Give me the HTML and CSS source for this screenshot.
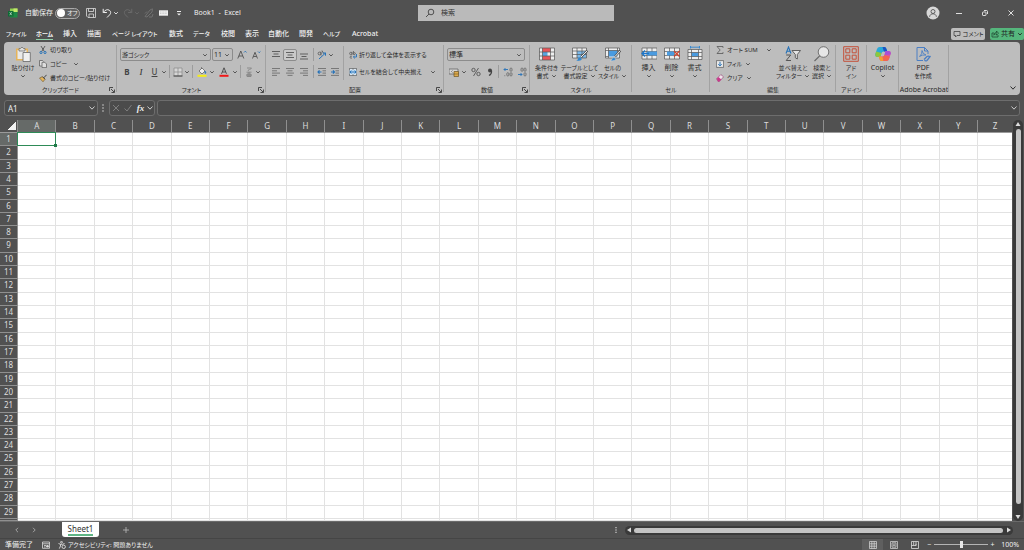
FILE: index.html
```html
<!DOCTYPE html>
<html lang="ja">
<head>
<meta charset="utf-8">
<title>Book1 - Excel</title>
<link rel="stylesheet" href="styles.css">
</head>
<body>
<svg class="sprite" aria-hidden="true">
  <symbol id="caret" viewBox="0 0 6 6"><path d="M1.200 2.200L3 4l1.800-1.800" fill="none" stroke="currentColor" stroke-width=".9"/></symbol>
  <symbol id="chev" viewBox="0 0 8 8"><path d="M1.500 2.500L4 5.200l2.500-2.700" fill="none" stroke="currentColor" stroke-width="1"/></symbol>
  <symbol id="launch" viewBox="0 0 6 6"><path d="M.5 4V.5H4M2 2l3 3M5.500 2.500v3h-3" fill="none" stroke="currentColor" stroke-width=".8"/></symbol>
</svg>
<div class="app">
  <header class="titlebar">
    <div class="quick">
      <svg class="logo" viewBox="0 0 10 10"><path d="M2 .5h7.500v3.500H2z" fill="#8fd14f"/><path d="M2 4h7.500v5.500H2z" fill="#1e8a45"/><path d="M5.500.5h4V4h-4z" fill="#c4e86b"/><rect y="3" width="5.500" height="5.500" rx=".6" fill="#0f6b35"/><path d="M1.700 4.200l2 3M3.700 4.200l-2 3" stroke="#cfe8d6" stroke-width=".7"/></svg>
      <label class="autosave"><span>自動保存</span><input type="checkbox" class="switch-input"><span class="switch"><i></i>オフ</span></label>
      <button class="qb qb-save" aria-label="保存"><svg viewBox="0 0 10 10"><path d="M.5.500h9v9h-7.500L.5 8zM2.500.5v3h5v-3M3 9.500V6h4.500v3.500" fill="none" stroke="#ddd" stroke-width=".8"/></svg></button>
      <button class="qb qb-undo" aria-label="元に戻す"><svg viewBox="0 0 10 10"><path d="M1.200.8v3.700h3.700M1.300 4.300C3 2 5.500 1 7.300 2.200s1.700 3.300.3 4.700L5 9.500" fill="none" stroke="#eee" stroke-width="1"/></svg></button>
      <svg class="c6 light"><use href="#caret"/></svg>
      <button class="qb qb-redo" aria-label="やり直し" disabled><svg viewBox="0 0 10 10"><path d="M8.800.8v3.700H5.100M8.700 4.300C7 2 4.500 1 2.700 2.200S1 5.500 2.400 6.900L5 9.500" fill="none" stroke="#6a6a6a" stroke-width="1"/></svg></button>
      <svg class="c6 dim"><use href="#caret"/></svg>
      <button class="qb qb-pen" aria-label="書式" disabled><svg viewBox="0 0 10 10"><path d="M1 8.500L6 2l2.500-1.200L8 4 3 9zM1 5.500l2-2M5 9h3l1-3" fill="none" stroke="#707070" stroke-width="1"/></svg></button>
      <button class="qb qb-key" aria-label="フォーム"><svg viewBox="0 0 10 10"><rect y="2.300" width="9" height="5.400" fill="#eee"/><path d="M1 4h7M1 5.500h7" stroke="#aaa" stroke-width=".5" stroke-dasharray="1 .6"/></svg></button>
      <button class="qb qb-more" aria-label="カスタマイズ"><svg viewBox="0 0 10 10"><path d="M3 3.500h4" stroke="#eee"/><path d="M3 5.500h4L5 7.500z" fill="#eee"/></svg></button>
      <span class="doc">Book1&nbsp; -&nbsp; Excel</span>
    </div>
    <label class="search"><svg viewBox="0 0 10 10"><circle cx="6" cy="4" r="2.800" fill="none" stroke="#444" stroke-width=".9"/><path d="M4 6L1 9" stroke="#444" stroke-width=".9"/></svg><input type="text" placeholder="検索" aria-label="検索"></label>
    <div class="window">
      <button class="avatar" aria-label="アカウント"><svg viewBox="0 0 14 14"><circle cx="7" cy="7" r="6.500" fill="#d8d8d8"/><circle cx="7" cy="5.500" r="2" fill="none" stroke="#555" stroke-width=".9"/><path d="M3.600 10.800c.3-4 6.500-4 6.800 0" fill="none" stroke="#555" stroke-width=".9"/></svg></button>
      <button aria-label="最小化"><svg viewBox="0 0 8 8"><path d="M1 4.500h6" stroke="#eee" stroke-width=".9"/></svg></button>
      <button aria-label="元のサイズ"><svg viewBox="0 0 8 8"><rect x="1.500" y="3" width="3.500" height="3.500" rx=".6" fill="none" stroke="#eee" stroke-width=".9"/><path d="M3 1.500h2.500q1 0 1 1V5" fill="none" stroke="#eee" stroke-width=".9"/></svg></button>
      <button aria-label="閉じる"><svg viewBox="0 0 8 8"><path d="M1.500 1.500l5 5M6.500 1.500l-5 5" stroke="#eee" stroke-width=".9"/></svg></button>
    </div>
  </header>

  <div class="tabrow">
    <nav class="tabs">
      <a href="#" class="kana">ファイル</a><a href="#" class="kana on">ホーム</a><a href="#">挿入</a><a href="#">描画</a><a href="#" class="kana">ページ レイアウト</a><a href="#">数式</a><a href="#" class="kana">データ</a><a href="#">校閲</a><a href="#">表示</a><a href="#">自動化</a><a href="#">開発</a><a href="#" class="kana">ヘルプ</a><a href="#">Acrobat</a>
    </nav>
    <button class="comment"><svg viewBox="0 0 8 8"><path d="M1 1.500h6v4H4L2.500 7V5.500H1z" fill="none" stroke="#444" stroke-width=".8"/></svg>コメント</button>
    <button class="share"><svg viewBox="0 0 8 8"><path d="M3 3H1v4h6V5M2.800 5.200C3 3 4.300 2.500 5.500 2.500V1l2 2.200-2 2V3.800C4.300 3.800 3.500 4 2.800 5.200z" fill="none" stroke="#204a32" stroke-width=".8"/></svg>共有<svg class="c6"><use href="#caret"/></svg></button>
  </div>

  <section class="ribbon">
    <div class="group g-clip">
      <div class="body">
        <button class="big w28"><svg viewBox="0 0 16 16"><path d="M1 2.500h12v12H1z" fill="#e6b45a"/><path d="M2.500 4h9v9h-9z" fill="#e9e9e9"/><path d="M4 2.500h1.500q1.500-3 3 0H10V5H4z" fill="#ddd" stroke="#666" stroke-width=".7"/><path d="M8 6.500h7.300v9H8z" fill="#f0f0f0" stroke="#666" stroke-width=".8"/></svg><span>貼り付け</span><svg class="c6"><use href="#caret"/></svg></button>
        <div class="stack">
          <button class="small"><svg viewBox="0 0 8 8"><path d="M2 0l3.300 5.500M6 0L2.700 5.500" stroke="#444" stroke-width=".8"/><g fill="none" stroke="#2672b8" stroke-width="1"><circle cx="2" cy="6.500" r="1.100"/><circle cx="6" cy="6.500" r="1.100"/></g></svg>切り取り</button>
          <button class="small"><svg viewBox="0 0 8 8"><path d="M2.500 6H.5V.5h3L4.500 1.500M3 2.300h2.800L7.500 4v3.600H3z" fill="#ddd" stroke="#555" stroke-width=".7"/></svg><span class="w20">コピー</span><svg class="c6"><use href="#caret"/></svg></button>
          <button class="small"><svg viewBox="0 0 8 8"><path d="M.5 4l3-1.300L6 5.200 4 7.800z" fill="#e6b45a" stroke="#6b5526" stroke-width=".6"/><path d="M3.500 2.700L6 5.200M4.800 3.800L7.600.8" stroke="#444" stroke-width="1"/></svg>書式のコピー/貼り付け</button>
        </div>
      </div>
      <div class="foot">クリップボード<button aria-label="クリップボード詳細"><svg><use href="#launch"/></svg></button></div>
    </div>

    <div class="group g-font">
      <div class="rows">
        <div class="row">
          <span class="combo w91"><select class="kana" aria-label="フォント"><option>游ゴシック</option></select><svg class="c6"><use href="#caret"/></svg></span>
          <span class="combo w21"><select aria-label="サイズ"><option>11</option></select><svg class="c6"><use href="#caret"/></svg></span>
          <button class="t w15" aria-label="拡大"><svg viewBox="0 0 10 10"><path d="M.8 8.500L3.800 1l3 7.500M2 6h3.600" fill="none" stroke="#444" stroke-width=".8"/><path d="M7 2.500l1.300-1.300 1.300 1.300" fill="none" stroke="#2672b8" stroke-width=".9"/></svg></button>
          <button class="t w14" aria-label="縮小"><svg viewBox="0 0 10 10"><path d="M1.500 8.500L4 2.300l2.500 6.200M2.500 6.500h3" fill="none" stroke="#444" stroke-width=".8"/><path d="M7 1.500l1.200 1.200 1.200-1.200" fill="none" stroke="#2672b8" stroke-width=".9"/></svg></button>
        </div>
        <div class="row">
          <button class="t w14"><b>B</b></button><button class="t w14"><i class="ital">I</i></button><button class="t w13"><u>U</u></button><svg class="c6"><use href="#caret"/></svg><i class="bar"></i>
          <button class="t w12" aria-label="罫線"><svg viewBox="0 0 10 10"><path d="M1 1h8v8H1zM5 1v8M1 5h8" fill="#d6d6d6" stroke="#888" stroke-width=".7"/><path d="M.5 9h9" stroke="#444"/></svg></button><svg class="c6"><use href="#caret"/></svg><i class="bar"></i>
          <button class="t w14" aria-label="塗りつぶし"><svg viewBox="0 0 10 10"><path d="M2 4L5 1l3 3-3 3zM4.500 1.500V.2" fill="#eee" stroke="#555" stroke-width=".7"/><path d="M8 4q1.500 2 .5 2.500T8 4" fill="#2672b8" stroke="#2672b8" stroke-width=".6"/><path d="M.5 7.800h9v2h-9z" fill="#f7ee14"/></svg></button><svg class="c6"><use href="#caret"/></svg>
          <button class="t w17" aria-label="文字の色"><svg viewBox="0 0 10 10"><path d="M2.500 6.800L5 .8l2.500 6M3.300 5h3.400" fill="none" stroke="#444" stroke-width=".9"/><path d="M.5 7.800h9v2h-9z" fill="#f01818"/></svg></button><svg class="c6"><use href="#caret"/></svg><i class="bar"></i>
          <button class="t w12" aria-label="ふりがな"><svg viewBox="0 0 10 10"><path d="M3 1h4.500L5.500 3M5 2.300L4 4M2.500 5.200h5M3 7h4v2.500H3zM2.500 8.200h5M5 5v4.500" fill="none" stroke="#777" stroke-width=".7"/></svg></button><svg class="c6"><use href="#caret"/></svg>
        </div>
      </div>
      <div class="foot">フォント<button aria-label="フォント詳細"><svg><use href="#launch"/></svg></button></div>
    </div>

    <div class="group g-align">
      <div class="body">
        <div class="rows flush">
          <div class="row">
            <button class="t w14" aria-label="上揃え"><svg viewBox="0 0 10 10"><path d="M1 1.500h8M2.500 4h5M1 6.500h8" stroke="#555" stroke-width=".9"/></svg></button>
            <button class="t w14 boxed" aria-label="上下中央揃え"><svg viewBox="0 0 10 10"><path d="M1 2.500h8M2.500 5h5M1 7.500h8" stroke="#555" stroke-width=".9"/></svg></button>
            <button class="t w14" aria-label="下揃え"><svg viewBox="0 0 10 10"><path d="M1 4h8M2.500 6.500h5M1 9h8" stroke="#555" stroke-width=".9"/></svg></button><i class="bar"></i>
            <button class="t w12" aria-label="方向"><svg viewBox="0 0 10 10"><g fill="none" stroke="#555" stroke-width=".8"><circle cx="2.500" cy="3.500" r="1.400"/><path d="M4 1.500v4M5 .5l1.500 3"/></g><path d="M2 9l6.500-6M5.800 3h2.700v2.700" fill="none" stroke="#2672b8" stroke-width="1"/></svg></button><svg class="c6"><use href="#caret"/></svg>
          </div>
          <div class="row">
            <button class="t w14" aria-label="左揃え"><svg viewBox="0 0 10 10"><path d="M1 1.500h8M1 3.800h5M1 6.100h8M1 8.400h5" stroke="#666" stroke-width=".8"/></svg></button>
            <button class="t w14" aria-label="中央揃え"><svg viewBox="0 0 10 10"><path d="M1 1.500h8M2.500 3.800h5M1 6.100h8M2.500 8.400h5" stroke="#666" stroke-width=".8"/></svg></button>
            <button class="t w14" aria-label="右揃え"><svg viewBox="0 0 10 10"><path d="M1 1.500h8M4 3.800h5M1 6.100h8M4 8.400h5" stroke="#666" stroke-width=".8"/></svg></button><i class="bar"></i>
            <button class="t w12" aria-label="インデントを減らす"><svg viewBox="0 0 10 10"><path d="M1 1.500h8M5.500 3.800H9M5.500 6.100H9M1 8.400h8" stroke="#666" stroke-width=".8"/><path d="M4.500 5H1M2.500 3.300L1 5l1.500 1.700" fill="none" stroke="#2672b8" stroke-width="1.200"/></svg></button>
            <button class="t w14" aria-label="インデントを増やす"><svg viewBox="0 0 10 10"><path d="M1 1.500h8M5.500 3.800H9M5.500 6.100H9M1 8.400h8" stroke="#666" stroke-width=".8"/><path d="M1 5h3.500M3 3.300L4.500 5 3 6.700" fill="none" stroke="#2672b8" stroke-width="1.200"/></svg></button>
          </div>
        </div>
        <i class="tallbar"></i>
        <div class="rows wraps">
          <div class="row"><button class="small"><svg viewBox="0 0 8 8"><g fill="none" stroke="#555" stroke-width=".7"><circle cx="1.800" cy="2.500" r="1.200"/><path d="M3 .8v3M4.500 0v3.700M4.500 2q2-1 2 .5t-2 .8M3 5.200q-2-.5-2 1t2 .8"/></g><path d="M7.500 3v3H4.500M5.800 4.600L4.400 6l1.400 1.400" fill="none" stroke="#2672b8" stroke-width=".9"/></svg>折り返して全体を表示する</button></div>
          <div class="row"><button class="small"><svg viewBox="0 0 8 8"><path d="M.4.4h7.200v7.200H.4z" fill="#d9e6f2" stroke="#555" stroke-width=".7"/><path d="M4 .4v1.400M4 6.200v1.400" stroke="#555" stroke-width=".7"/><path d="M.6 2h6.800v4H.6z" fill="#bcd9f0"/><path d="M1 4h6M2.300 2.600L1 4l1.300 1.400M5.700 2.600L7 4 5.700 5.400" fill="none" stroke="#1e6cb5" stroke-width=".9"/></svg><span class="w69">セルを結合して中央揃え</span><svg class="c6"><use href="#caret"/></svg></button></div>
        </div>
      </div>
      <div class="foot">配置<button aria-label="配置詳細"><svg><use href="#launch"/></svg></button></div>
    </div>

    <div class="group g-num">
      <div class="rows">
        <div class="row"><span class="combo w78"><select aria-label="表示形式"><option>標準</option></select><svg class="c6"><use href="#caret"/></svg></span></div>
        <div class="row">
          <button class="t w14" aria-label="通貨"><svg viewBox="0 0 10 10"><path d="M0 2h9v5H0z" fill="#d6d6d6" stroke="#666" stroke-width=".8"/><path d="M3.500 3.500q-2 1 0 2" fill="none" stroke="#555" stroke-width=".7"/><path d="M5 4.500h4.500v5H5z" fill="#e0ac4c" stroke="#6b5526" stroke-width=".7"/><path d="M5 7h4.500" stroke="#6b5526" stroke-width=".6"/></svg></button><svg class="c6"><use href="#caret"/></svg>
          <button class="t w17" aria-label="パーセント"><svg viewBox="0 0 10 10"><g fill="none" stroke="#555" stroke-width=".9"><circle cx="2.500" cy="3" r="1.700"/><circle cx="7.500" cy="7" r="1.700"/><path d="M7.500 1l-5 8"/></g></svg></button>
          <button class="t w12" aria-label="桁区切り"><svg viewBox="0 0 10 10"><circle cx="5" cy="3.500" r="2" fill="#444"/><path d="M6.500 3.500Q7 7 4 8.500" fill="none" stroke="#444" stroke-width="1.200"/></svg></button><i class="bar"></i>
          <button class="t w13" aria-label="小数点以下を増やす"><svg viewBox="0 0 10 10"><path d="M5 2.500H1M2.500 1L1 2.500 2.500 4" fill="none" stroke="#2672b8" stroke-width=".9"/><g fill="none" stroke="#666" stroke-width=".8"><rect x="7" y="1" width="2" height="3.300" rx="1"/><rect x="7" y="5.700" width="2" height="3.300" rx="1"/><rect x="3.800" y="5.700" width="2" height="3.300" rx="1"/><path d="M1.800 8.300V9.200"/></g></svg></button>
          <button class="t w15" aria-label="小数点以下を減らす"><svg viewBox="0 0 10 10"><path d="M1 7.500h4M3.500 6L5 7.500 3.500 9" fill="none" stroke="#2672b8" stroke-width=".9"/><g fill="none" stroke="#666" stroke-width=".8"><rect x="7" y="1" width="2" height="3.300" rx="1"/><rect x="7" y="5.700" width="2" height="3.300" rx="1"/><rect x="4" y="1" width="2" height="3.300" rx="1"/></g></svg></button>
        </div>
      </div>
      <div class="foot">数値<button aria-label="数値詳細"><svg><use href="#launch"/></svg></button></div>
    </div>

    <div class="group g-style">
      <div class="body">
        <button class="big w33"><svg viewBox="0 0 16 16"><path d="M.5 2h15v12H.5z" fill="#eee"/><path d="M3.500 2h8v4h-8zM3.500 10h8v4h-8z" fill="#e8565a"/><path d="M3.500 6h5v4h-5z" fill="#5aa5e0"/><path d="M.5 2h15v12H.5zM.5 6h15M.5 10h15M3.500 2v12M11.500 2v12" fill="none" stroke="#555" stroke-width=".7"/></svg><span>条件付き</span><span>書式<svg class="c6"><use href="#caret"/></svg></span></button>
        <button class="big w33"><svg viewBox="0 0 16 16"><path d="M.5 2h14v10H.5z" fill="#eee"/><path d="M5 5h9.500v7H5z" fill="#7cb8e8"/><path d="M.5 2h14v10H.5zM.5 5h14M.5 8.500h14M5 2v10M10 2v10" fill="none" stroke="#555" stroke-width=".7"/><path d="M15.500 4.500L9 11" stroke="#555" stroke-width="2.200"/><path d="M15.300 4.700L9 11" stroke="#eee" stroke-width="1"/><path d="M4 15q2-.5 2-2.500 2-2 3.500 0T4 15z" fill="#2f86d0"/></svg><span>テーブルとして</span><span>書式設定<svg class="c6"><use href="#caret"/></svg></span></button>
        <button class="big w33"><svg viewBox="0 0 16 16"><path d="M.5 2h14v10H.5z" fill="#eee"/><path d="M3.500 4.500h9v6h-9z" fill="#4a9be0"/><path d="M.5 2h14v10H.5zM.5 4.500h14M.5 10.500h3M3.500 2v10M12.500 2v4" fill="none" stroke="#555" stroke-width=".7"/><path d="M15.500 4.500L10 10.500" stroke="#555" stroke-width="2.200"/><path d="M15.300 4.700L10 10.500" stroke="#eee" stroke-width="1"/><path d="M5 15q2-.5 2-2.500 2-2 3.500 0T5 15z" fill="#2f86d0" stroke="#ddd" stroke-width=".4"/></svg><span>セルの</span><span>スタイル<svg class="c6"><use href="#caret"/></svg></span></button>
      </div>
      <div class="foot">スタイル</div>
    </div>

    <div class="group g-cell">
      <div class="body">
        <button class="big w23"><svg viewBox="0 0 16 16"><path d="M1 2h15v11H1z" fill="#eee"/><path d="M1 2h15v11H1zM1 5.500h15M1 9.500h15M6 2v11M11 2v11" fill="none" stroke="#555" stroke-width=".7"/><path d="M6 5.500h10v4H6z" fill="#4a9be0"/><path d="M8 7.500H1M4 4.500l-3 3 3 3" fill="none" stroke="#1e76c8" stroke-width="1.300"/></svg><span class="kanji">挿入</span><svg class="c6"><use href="#caret"/></svg></button>
        <button class="big w23"><svg viewBox="0 0 16 16"><path d="M.5 2h15v11H.5z" fill="#eee"/><path d="M.5 2h15v11H.5zM.5 5.500h15M.5 9.500h15M5.500 2v11M10.500 2v11" fill="none" stroke="#555" stroke-width=".7"/><path d="M3 5.500h7v4H3z" fill="#4a9be0"/><path d="M10 5l5.500 5.500M15.500 5L10 10.500" stroke="#d0432f" stroke-width="1.200"/></svg><span class="kanji">削除</span><svg class="c6"><use href="#caret"/></svg></button>
        <button class="big w23"><svg viewBox="0 0 16 16"><path d="M1 3.500h14v10H1z" fill="#eee"/><path d="M4.500 6.500h7v4h-7z" fill="#4a9be0"/><path d="M1 3.500h14v10H1zM1 6.500h14M1 10.500h14M4.500 3.500v10M11.500 3.500v10" fill="none" stroke="#555" stroke-width=".7"/><path d="M3.500 0v2.500M12.500 0v2.500M3.500 1.200h9" stroke="#2f86d0" stroke-width=".9"/></svg><span class="kanji">書式</span><svg class="c6"><use href="#caret"/></svg></button>
      </div>
      <div class="foot">セル</div>
    </div>

    <div class="group g-edit">
      <div class="body">
        <div class="stack w61">
          <button class="small"><svg viewBox="0 0 8 8"><path d="M7 1.800V.5H1L4.200 4 1 7.500h6V6.200" fill="none" stroke="#555" stroke-width=".8"/></svg><span class="w36">オート SUM</span><svg class="c6"><use href="#caret"/></svg></button>
          <button class="small"><svg viewBox="0 0 8 8"><path d="M.4.6h7.200v6.800H.4z" fill="#e8e8e8" stroke="#555" stroke-width=".7"/><path d="M4 1.800v4M2.300 4.200L4 5.900l1.700-1.700" fill="none" stroke="#2672b8" stroke-width="1"/></svg>フィル<svg class="c6"><use href="#caret"/></svg></button>
          <button class="small"><svg viewBox="0 0 8 8"><path d="M.6 4.800L4.800.6l2.800 2.200L3.400 7.500H2z" fill="#f1e4ec" stroke="#8d3a6c" stroke-width=".6"/><path d="M.6 4.800L2.500 3l2.800 2.400-1.900 2.100H2z" fill="#c93a8c"/></svg>クリア<svg class="c6"><use href="#caret"/></svg></button>
        </div>
        <button class="big w32"><svg viewBox="0 0 16 16"><path d="M1 7.500L3.500 1 6 7.500M2 5.300h3" fill="none" stroke="#2672b8" stroke-width="1.100"/><path d="M1.200 9h4.500l-4.500 5.500h4.800" fill="none" stroke="#555" stroke-width="1"/><path d="M7 4.500h8.500L12.300 8.500v4.500l-2-1.300V8.500z" fill="#e4e4e4" stroke="#555" stroke-width=".9"/></svg><span>並べ替えと</span><span>フィルター<svg class="c6"><use href="#caret"/></svg></span></button>
        <button class="big w26"><svg viewBox="0 0 16 16"><circle cx="9.500" cy="6" r="5.300" fill="#e6e6e6" stroke="#666" stroke-width=".9"/><path d="M5.700 9.800L.5 15" stroke="#666" stroke-width="1.100"/></svg><span>検索と</span><span>選択<svg class="c6"><use href="#caret"/></svg></span></button>
      </div>
      <div class="foot">編集</div>
    </div>

    <div class="group g-addin">
      <div class="body"><button class="big w30"><svg viewBox="0 0 16 16"><path d="M.7.7h14.600v14.600H.7zM2.800 2.800h4v4h-4zM9.200 2.800h4v4h-4zM2.800 9.200h4v4h-4zM9.200 9.200h4v4h-4z" fill="none" stroke="#c4513a" stroke-width="1"/></svg><span>アド</span><span>イン</span></button></div>
      <div class="foot">アドイン</div>
    </div>

    <div class="group g-copilot">
      <div class="body"><button class="big w31"><svg viewBox="0 0 16 16"><path d="M4.500 1h5q1.500 0 2 2l.8 2.500H8.500Q7 5.500 6.500 7l-1 4H2.500Q-.5 11 .5 7.500L2 3Q2.700 1 4.500 1z" fill="#2aa9d8"/><path d="M7.500 1h2q1.500 0 2 2l.8 2.500H9Q8 3 7.500 1z" fill="#1c55c4"/><path d="M1.200 5.500L.5 7.500Q-.5 11 2.500 11h3l1-4z" fill="#8bc83f"/><path d="M11.500 15h-5q-1.500 0-2-2l-.8-2.500H7.500Q9 10.500 9.500 9l1-4h3q3 0 2 3.500L14 13q-.7 2-2.500 2z" fill="#e0509e"/><path d="M3.700 10.500h3.800Q8 13 8.500 15h-2q-1.500 0-2-2z" fill="#f2a02e"/><path d="M7.500 10.500Q9 10.500 9.500 9l5.300 1.700L14 13q-.7 2-2.500 2h-3z" fill="#f2654f"/><path d="M10.500 5h3q3 0 2 3.500l-6 .5z" fill="#a74fd6"/></svg><span class="kanji">Copilot</span><svg class="c6"><use href="#caret"/></svg></button></div>
    </div>

    <div class="group g-acro">
      <div class="body"><button class="big w48"><svg viewBox="0 0 16 16"><path d="M8 14.500H2V1.500h7.500L13 5v3M9.500 1.500V5H13" fill="none" stroke="#4b7fc4" stroke-width="1"/><path d="M4.500 10.500Q7.500 8 7 4.500 7.500 8 11 9 7 8.500 4.500 10.500z" fill="none" stroke="#4b7fc4" stroke-width=".9"/><path d="M9 13.500l3-3q1.500-1 2 .2M15.500 10l-3.500 4.500q-1.500 1-2.500-.3" fill="none" stroke="#4b7fc4" stroke-width="1.300"/></svg><span class="kanji">PDF</span><span>を作成</span></button></div>
      <div class="foot kanji">Adobe Acrobat</div>
    </div>
    <button class="collapse" aria-label="リボンを折りたたむ"><svg><use href="#chev"/></svg></button>
  </section>

  <div class="formula">
    <label class="namebox"><input type="text" value="A1" aria-label="名前ボックス"><svg><use href="#chev"/></svg></label>
    <svg class="dots" viewBox="0 0 2 8"><path d="M0 1h2M0 4h2M0 7h2" stroke="#bbb" stroke-width="1.200"/></svg>
    <div class="fx">
      <button aria-label="キャンセル"><svg viewBox="0 0 8 8"><path d="M1 1l6 6M7 1L1 7" stroke="#858585" stroke-width=".9"/></svg></button>
      <button aria-label="入力"><svg viewBox="0 0 8 8"><path d="M.5 4.500L3 7l4.500-6" fill="none" stroke="#858585" stroke-width=".9"/></svg></button>
      <button class="fn">fx</button><svg class="fxc"><use href="#chev"/></svg>
    </div>
    <label class="fbar"><input type="text" aria-label="数式バー"><svg><use href="#chev"/></svg></label>
  </div>

  <main class="sheet">
    <table class="cells" id="cells"></table>
    <div class="vscroll"><svg viewBox="0 0 6 6"><path d="M3 1l2.500 4h-5z" fill="#ddd"/></svg><i></i><svg viewBox="0 0 6 6"><path d="M3 5L.5 1h5z" fill="#ddd"/></svg></div>
  </main>

  <div class="sheetbar">
    <button class="nav" aria-label="前へ"><svg viewBox="0 0 6 6"><path d="M4 .8L1.800 3 4 5.200" fill="none" stroke="#aaa" stroke-width=".9"/></svg></button>
    <button class="nav" aria-label="次へ"><svg viewBox="0 0 6 6"><path d="M2 .8L4.200 3 2 5.200" fill="none" stroke="#aaa" stroke-width=".9"/></svg></button>
    <button class="sheettab"><span>Sheet1</span></button>
    <button class="add" aria-label="新しいシート"><svg viewBox="0 0 6 6"><path d="M3 0v6M0 3h6" stroke="#bbb" stroke-width=".8"/></svg></button>
    <svg class="grip" viewBox="0 0 2 6"><path d="M0 .7h2M0 3h2M0 5.300h2" stroke="#bbb" stroke-width=".9"/></svg>
    <div class="hscroll"><svg viewBox="0 0 6 6"><path d="M1 3l4-2.500v5z" fill="#ddd"/></svg><i></i><svg viewBox="0 0 6 6"><path d="M5 3L1 .5v5z" fill="#ddd"/></svg></div>
  </div>

  <footer class="status">
    <span class="ready">準備完了</span>
    <svg class="rec" viewBox="0 0 8 8"><path d="M.5 1h7v6.300h-7zM.5 2.800h7M2 4.500h2M2 6h1.500" fill="none" stroke="#ddd" stroke-width=".8"/><circle cx="5.500" cy="5.300" r="1.300" fill="#ddd"/></svg>
    <svg class="acc" viewBox="0 0 8 8"><g fill="none" stroke="#eee" stroke-width=".8"><circle cx="3.500" cy="1.200" r=".9"/><path d="M.5 2.500L2.500 3.300V5L1.300 7.600M6.500 2.500L4.500 3.300M2.500 3.300h2"/><circle cx="5.700" cy="5.800" r="1.700"/></g></svg>
    <span class="acctext">アクセシビリティ: 問題ありません</span>
    <button class="view on" aria-label="標準"><svg viewBox="0 0 8 8"><path d="M.5.5h7v7h-7zM.5 2.800h7M.5 5.200h7M2.800.5v7M5.200.5v7" fill="none" stroke="#ddd" stroke-width=".7"/></svg></button>
    <button class="view" aria-label="ページ レイアウト"><svg viewBox="0 0 8 8"><path d="M.5.5h7v7h-7zM2 1.800h4v4.400H2zM2.800 3.200h2.400M2.800 4.600h2.400" fill="none" stroke="#ddd" stroke-width=".7"/></svg></button>
    <button class="view" aria-label="改ページ"><svg viewBox="0 0 8 8"><path d="M.5.5h7v7h-7zM.5 4.500h4.500v-4M2.700.5v4M5 4.500V3" fill="none" stroke="#ddd" stroke-width=".8"/></svg></button>
    <button class="zb" aria-label="縮小">−</button>
    <input class="zoom" type="range" min="0" max="100" value="50" aria-label="ズーム">
    <button class="zb" aria-label="拡大">+</button>
    <span class="pct">100%</span>
  </footer>
</div>
<script src="app.js"></script>
</body>
</html>
```

FILE: app.js
```js
const table = document.getElementById('cells');
const letters = 'ABCDEFGHIJKLMNOPQRSTUVWXYZ'.split('');
const ROWS = 29;

const head = table.createTHead().insertRow();
head.innerHTML = '<th class="corner"></th>' +
  letters.map((l, i) => `<th scope="col"${i === 0 ? ' class="sel"' : ''}>${l}</th>`).join('');

const body = table.createTBody();
for (let r = 1; r <= ROWS + 1; r++) {
  const row = body.insertRow();
  const label = r <= ROWS ? r : '';
  row.innerHTML = `<th scope="row"${r === 1 ? ' class="sel"' : ''}>${label}</th>` +
    letters.map((_, i) => (r === 1 && i === 0 ? '<td class="active"></td>' : '<td></td>')).join('');
}
```

FILE: styles.css
```css
* { box-sizing: border-box; }
html, body { margin: 0; height: 100%; }
body {
  background: #515151;
  color: #f0f0f0;
  font: 7px/8px "Noto Sans", "Noto Sans CJK JP", sans-serif;
  font-feature-settings: "palt";
  overflow: hidden;
}
button, input, select {
  font: inherit;
  font-feature-settings: inherit;
  color: inherit;
  background: none;
  border: 0;
  margin: 0;
  padding: 0;
  border-radius: 0;
  outline: 0;
  white-space: nowrap;
}
button { display: flex; align-items: center; justify-content: center; }
svg { display: block; flex: none; }
.sprite { position: absolute; width: 0; height: 0; }
.c6 { width: 6px; height: 6px; }
.light { color: #eee; }
.dim { color: #6a6a6a; }
.app { display: flex; flex-direction: column; height: 100vh; }

/* title bar */
.titlebar {
  display: grid;
  grid-template-columns: 418fr 196fr 410fr;
  align-items: center;
  height: 26px;
  flex: none;
}
.quick { display: flex; align-items: center; padding-left: 8px; white-space: nowrap; }
.logo { width: 10px; height: 10px; margin-right: 7px; }
.autosave { display: flex; align-items: center; gap: 3px; width: 55px; }
.autosave > span:first-child { width: 27px; }
.switch-input { position: absolute; opacity: 0; width: 1px; height: 1px; }
.switch {
  display: flex;
  align-items: center;
  gap: 2px;
  width: 25px;
  height: 11px;
  padding-left: 1px;
  border: 1px solid #aaa;
  border-radius: 6px;
  background: #606060;
  font-size: 6px;
}
.switch i { width: 8px; height: 8px; border-radius: 50%; background: #fff; }
.qb { width: 10px; height: 12px; }
.qb svg { width: 10px; height: 10px; }
.qb-save { margin-left: 6px; }
.qb-undo { margin: 0 1px 0 6px; }
.qb-redo { margin: 0 1px 0 4px; }
.qb-pen { margin-left: 4px; }
.qb-key { margin-left: 5px; }
.qb-more { margin-left: 5px; }
.doc { margin-left: 10px; }
.search {
  display: flex;
  align-items: center;
  gap: 6px;
  height: 16px;
  padding-left: 7px;
  background: #bababa;
  color: #333;
}
.search svg { width: 10px; height: 10px; }
.search input { flex: 1; min-width: 0; }
.search input::placeholder { color: #333; opacity: 1; }
.window { display: flex; justify-content: flex-end; align-items: center; }
.window button { width: 26px; height: 14px; }
.window svg { width: 8px; height: 8px; }
.window .avatar svg { width: 14px; height: 14px; }

/* ribbon tabs */
.tabrow { display: flex; align-items: center; height: 16px; flex: none; padding-left: 6px; }
.tabs {
  display: grid;
  grid-template-columns: 30px 27px 24px 25px 57px 24px 28px 24px 23px 31px 24px 29px 27px;
  flex: 1;
}
.tabs a {
  justify-self: start;
  padding: 1px 0;
  color: inherit;
  font-weight: 500;
  text-decoration: none;
  white-space: nowrap;
  border-bottom: 1px solid transparent;
}
.tabs .on { font-weight: 700; border-color: #8fd0a8; }
.kana, .tabs .kana { font-size: 6px; }
.comment, .share { height: 12px; gap: 2px; border-radius: 2px; color: #222; }
.comment { width: 34px; background: #bdbdbd; margin-right: 5px; font-size: 6px; }
.share { width: 34px; background: #55b67c; }
.comment svg, .share svg { width: 8px; height: 8px; }
.share .c6 { width: 6px; height: 6px; }

/* ribbon */
.ribbon {
  display: flex;
  flex: none;
  height: 53px;
  margin: 0 4px;
  border-radius: 4px;
  background: #bdbdbd;
  color: #2b2b2b;
  font-size: 6px;
}
.ribbon .c6 { color: #4a4a4a; }
.kanji { font-size: 7px; }
.group { position: relative; display: flex; flex-direction: column; flex: none; }
.group::after {
  content: "";
  position: absolute;
  top: 3px;
  right: 0;
  bottom: 3px;
  width: 1px;
  background: #a2a2a2;
}
.g-clip { width: 113px; }
.g-font { width: 149px; }
.g-align { width: 178px; }
.g-num { width: 86px; }
.g-style { width: 102px; }
.g-cell { width: 78px; }
.g-edit { width: 126px; }
.g-addin { width: 31px; }
.g-copilot { width: 32px; }
.g-acro { width: 50px; }
.body { display: flex; height: 42px; flex: none; }
.g-clip .body { padding-left: 5px; }
.g-cell .body { padding-left: 5px; }
.g-edit .body { padding-left: 6px; }
.foot { display: grid; place-items: center; height: 11px; white-space: nowrap; }
.foot > button { position: absolute; right: 2px; bottom: 2px; }
.foot svg { width: 6px; height: 6px; }
.big { flex-direction: column; justify-content: flex-start; padding-top: 4px; }
.big > svg:first-child { width: 16px; height: 16px; margin-bottom: 2px; }
.big > span { display: flex; align-items: center; gap: 2px; height: 8px; }
.big > .c6 { margin-top: 1px; }
.stack { display: grid; grid-template-rows: repeat(3, 14px); padding: 1px 0 0 2px; }
.stack.w61 { padding-left: 0; }
.small { justify-content: flex-start; gap: 3px; }
.small > svg { width: 8px; height: 8px; }
.small > .c6 { width: 6px; height: 6px; }
.small span { text-align: left; }
.rows { display: flex; flex-direction: column; height: 42px; padding: 4px 0 0 3px; }
.rows.wraps { padding-left: 5px; }
.wraps .small { gap: 2px; }
.row { display: flex; align-items: center; height: 17px; }
.t { height: 12px; }
.t svg { width: 10px; height: 10px; }
.t b, .t u { font-size: 8px; font-weight: 500; color: #444; }
.t b { font-weight: 700; }
.ital { font-family: "Liberation Serif", serif; font-size: 9px; }
.bar { width: 1px; height: 13px; margin: 0 2px; background: #9c9c9c; }
.tallbar { width: 1px; height: 34px; margin: 4px 0 0 1px; background: #a2a2a2; }
.boxed { border: 1px solid #8c8c8c; border-radius: 2px; background: #c9c9c9; }
.combo {
  display: grid;
  grid-template-columns: 1fr 8px;
  align-items: center;
  height: 13px;
  border: 1px solid #8c8c8c;
  border-radius: 2px;
  font-size: 7px;
}
.combo + .combo { margin-left: 1px; }
.combo + .t { margin-left: 1px; }
.combo select { appearance: none; padding-left: 1px; min-width: 0; width: 100%; }
.combo .kana { font-size: 6px; }
.w12 { width: 12px; }
.w13 { width: 13px; }
.w14 { width: 14px; }
.w15 { width: 15px; }
.w17 { width: 17px; }
.w20 { width: 20px; }
.w21 { width: 21px; }
.w23 { width: 23px; }
.w26 { width: 26px; }
.w28 { width: 28px; }
.w30 { width: 30px; }
.w31 { width: 31px; }
.w32 { width: 32px; }
.w33 { width: 33px; }
.w36 { width: 36px; }
.w48 { width: 48px; }
.w61 { width: 61px; }
.w69 { width: 69px; }
.w78 { width: 78px; }
.w91 { width: 91px; }
.collapse { margin-left: auto; align-self: flex-end; padding: 0 3px 3px 0; }
.collapse svg { width: 8px; height: 8px; }

/* formula bar */
.formula { display: flex; flex: none; height: 25px; padding: 5px 4px 4px; }
.namebox, .fx, .fbar {
  display: flex;
  align-items: center;
  border: 1px solid #6d6d6d;
  border-radius: 3px;
  background: #4b4b4b;
}
.namebox { width: 94px; padding: 0 1px 0 3px; font-size: 8px; }
.namebox input, .fbar input { flex: 1; min-width: 0; }
.namebox svg, .fbar svg, .fxc { width: 8px; height: 8px; color: #ccc; }
.dots { width: 2px; height: 8px; margin: 4px 5px 0 4px; }
.fx { width: 46px; padding-left: 2px; gap: 4px; }
.fx button svg { width: 8px; height: 8px; }
.fn { font: italic 700 9px/10px "Liberation Serif", serif; width: 10px; }
.fxc { margin-left: -3px; }
.fbar { flex: 1; margin-left: 2px; padding-right: 1px; }

/* worksheet */
.sheet { display: flex; flex: 1; min-height: 0; }
.cells { display: flex; flex-direction: column; flex: 1; min-width: 0; border-collapse: collapse; }
.cells thead, .cells tbody { display: grid; }
.cells thead { height: 13px; flex: none; }
.cells tbody { flex: 1; min-height: 0; grid-template-rows: repeat(29, 1fr) 2px; background: #fff; }
.cells tr { display: grid; grid-template-columns: 18px repeat(25, 384fr) 340fr; min-height: 0; }
.cells th {
  padding: 0;
  min-width: 0;
  min-height: 0;
  background: #515151;
  color: #ddd;
  font-size: 8px;
  font-weight: 400;
  line-height: 12px;
  text-align: center;
  border-right: 1px solid #8f8f8f;
  overflow: hidden;
}
.cells thead th { border-bottom: 1px solid #9a9a9a; }
.cells tbody th { border-bottom: 1px solid #8f8f8f; }
.cells th:last-child { border-right: 0; }
.cells .sel { background: #666a68; }
.cells thead .corner { background: linear-gradient(135deg, transparent 50%, #f2f2f2 50%) 8px 2px / 8px 8px no-repeat #515151; }
.cells td { position: relative; padding: 0; min-width: 0; border: solid #e2e2e2; border-width: 0 1px 1px 0; }
.cells td:last-child { border-right: 0; }
.cells .active { z-index: 1; }
.active::before {
  content: "";
  position: absolute;
  inset: -1px;
  border: 1px solid #2e8b57;
}
.active::after {
  content: "";
  position: absolute;
  right: -2px;
  bottom: -2px;
  width: 3px;
  height: 3px;
  background: #1f7a48;
}
.vscroll, .hscroll { display: flex; align-items: center; gap: 2px; background: #3a3a3a; border-radius: 5px; }
.vscroll { flex-direction: column; flex: none; width: 10px; margin: 0 1px; padding: 1px 0; }
.vscroll svg, .hscroll svg { width: 6px; height: 6px; }
.vscroll i, .hscroll i { flex: 1; background: #c4c4c4; border-radius: 3px; }
.vscroll i { width: 5px; margin-bottom: 8px; }

/* sheet tabs */
.sheetbar { display: flex; align-items: center; flex: none; height: 17px; padding-left: 8px; border-top: 1px solid #6a6a6a; }
.nav { width: 17px; height: 12px; }
.nav svg, .add svg { width: 6px; height: 6px; }
.sheettab {
  align-self: flex-start;
  width: 37px;
  height: 15px;
  margin-left: 20px;
  border-radius: 0 0 3px 3px;
  background: #fff;
  color: #333;
  font-size: 8px;
}
.sheettab span { height: 12px; line-height: 10px; border-bottom: 2px solid #5fb585; }
.add { width: 14px; height: 12px; margin-left: 20px; }
.grip { width: 2px; height: 6px; margin: 0 8px 0 auto; }
.hscroll { width: 38.2%; height: 9px; padding: 0 1px; margin-right: 11px; }
.hscroll i { height: 5px; }
.hscroll svg:last-child { margin-left: 1px; }

/* status bar */
.status { display: flex; align-items: center; flex: none; height: 12px; padding: 0 5px; border-top: 1px solid #454545; white-space: nowrap; }
.ready { width: 37px; }
.rec, .acc { width: 8px; height: 8px; }
.acc { margin: 0 2px 0 8px; }
.acctext { margin-right: auto; font-size: 6px; }
.view { width: 21px; height: 11px; }
.view.on { background: #5f5f5f; }
.view svg { width: 8px; height: 8px; }
.zb { width: 9px; height: 10px; }
.zoom { appearance: none; width: 54px; height: 10px; }
.zoom::-webkit-slider-runnable-track { height: 1px; background: #b5b5b5; }
.zoom::-webkit-slider-thumb { appearance: none; width: 3px; height: 7px; margin-top: -3px; background: #e8e8e8; }
.pct { width: 22px; text-align: right; }
```
